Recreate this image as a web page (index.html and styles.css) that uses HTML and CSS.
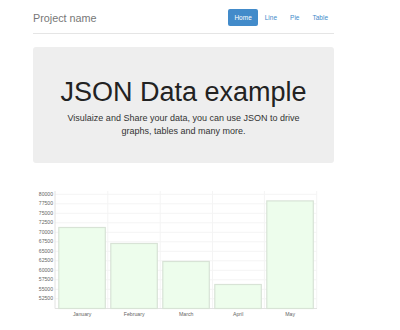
FILE: index.html
```html
<html>
<head>
<meta charset="utf-8">
<title>JSON Data example</title>
<link rel="stylesheet" href="styles.css">
</head>
<body>
<div class="container">
<div class="header">
<h3 class="brand">Project name</h3>
<ul class="navPills">
<li class="active"><a href="#">Home</a></li>
<li><a href="#">Line</a></li>
<li><a href="#">Pie</a></li>
<li><a href="#">Table</a></li>
</ul>
</div>
<div class="jumbotron">
<h1>JSON Data example</h1>
<p>Visulaize and Share your data, you can use JSON to drive graphs, tables and many more.</p>
</div>
<svg class="chart" width="301" height="145" viewBox="0 0 301 145">
<g class="grid">
<line x1="22" y1="14.3" x2="283.7" y2="14.3"/>
<line x1="22" y1="23.8" x2="283.7" y2="23.8"/>
<line x1="22" y1="33.3" x2="283.7" y2="33.3"/>
<line x1="22" y1="42.8" x2="283.7" y2="42.8"/>
<line x1="22" y1="52.3" x2="283.7" y2="52.3"/>
<line x1="22" y1="61.8" x2="283.7" y2="61.8"/>
<line x1="22" y1="71.3" x2="283.7" y2="71.3"/>
<line x1="22" y1="80.8" x2="283.7" y2="80.8"/>
<line x1="22" y1="90.3" x2="283.7" y2="90.3"/>
<line x1="22" y1="99.8" x2="283.7" y2="99.8"/>
<line x1="22" y1="109.3" x2="283.7" y2="109.3"/>
<line x1="22" y1="118.8" x2="283.7" y2="118.8"/>
<line x1="74.8" y1="11" x2="74.8" y2="128.3"/>
<line x1="127.2" y1="11" x2="127.2" y2="128.3"/>
<line x1="179.5" y1="11" x2="179.5" y2="128.3"/>
<line x1="231.4" y1="11" x2="231.4" y2="128.3"/>
<line x1="283.7" y1="11" x2="283.7" y2="128.3"/>
</g>
<g class="axis">
<line x1="22" y1="11" x2="22" y2="128.5"/>
<line x1="22" y1="128.5" x2="284" y2="128.5"/>
</g>
<g class="bars">
<rect x="25.8" y="47.5" width="46.5" height="81"/>
<rect x="77.8" y="63.5" width="46.5" height="65"/>
<rect x="129.8" y="81.5" width="46.5" height="47"/>
<rect x="181.8" y="104.5" width="46.5" height="24"/>
<rect x="233.8" y="20.9" width="46.5" height="107.6"/>
</g>
<g class="yLabels">
<text x="20" y="14.3">80000</text>
<text x="20" y="23.8">77500</text>
<text x="20" y="33.3">75000</text>
<text x="20" y="42.8">72500</text>
<text x="20" y="52.3">70000</text>
<text x="20" y="61.8">67500</text>
<text x="20" y="71.3">65000</text>
<text x="20" y="80.8">62500</text>
<text x="20" y="90.3">60000</text>
<text x="20" y="99.8">57500</text>
<text x="20" y="109.3">55000</text>
<text x="20" y="118.8">52500</text>
</g>
<g class="xLabels">
<text x="49.2" y="136.3">January</text>
<text x="101.2" y="136.3">February</text>
<text x="153.2" y="136.3">March</text>
<text x="205.2" y="136.3">April</text>
<text x="257.2" y="136.3">May</text>
</g>
</svg>
</div>
</body>
</html>
```

FILE: styles.css
```css
body
{
	margin: 0;
	background-color: #fff;
	font-family: "Liberation Sans", Arial, sans-serif;
	color: #333;
}
.container
{
	width: 301px;
	margin-left: 33px;
}
.header
{
	display: flex;
	align-items: center;
	justify-content: space-between;
	padding-top: 9px;
	padding-bottom: 7px;
	border-bottom: 1px solid #e5e5e5;
}
.brand
{
	margin: 0;
	font-size: 10.8px;
	font-weight: normal;
	color: #777;
}
.navPills
{
	display: flex;
	margin: 0;
	padding: 0;
	list-style: none;
}
.navPills li
{
	margin-left: 1px;
}
.navPills a
{
	display: block;
	padding: 4.5px 6px;
	font-size: 6.5px;
	line-height: 8px;
	color: #428bca;
	text-decoration: none;
	border-radius: 2px;
}
.navPills li.active a
{
	background-color: #428bca;
	color: #fff;
}
.jumbotron
{
	margin-top: 13px;
	padding: 31px 20px 26px;
	background-color: #eee;
	border-radius: 3px;
	text-align: center;
}
.jumbotron h1
{
	margin: 0;
	font-size: 27px;
	line-height: 29px;
	font-weight: normal;
	color: #222;
}
.jumbotron p
{
	margin: 5px 0 0;
	font-size: 9px;
	line-height: 12.5px;
	color: #333;
}
.chart
{
	display: block;
	margin-top: 17px;
}
.grid line
{
	stroke: #f4f4f4;
	stroke-width: 1;
}
.axis line
{
	stroke: #e2e2e2;
	stroke-width: 1;
}
.bars rect
{
	fill: #edfdec;
	stroke: #d8e3d6;
	stroke-width: 1.2;
}
.yLabels text
{
	font-size: 5.1px;
	fill: #666;
	text-anchor: end;
	dominant-baseline: middle;
}
.xLabels text
{
	font-size: 5.2px;
	fill: #666;
	text-anchor: middle;
}
```
